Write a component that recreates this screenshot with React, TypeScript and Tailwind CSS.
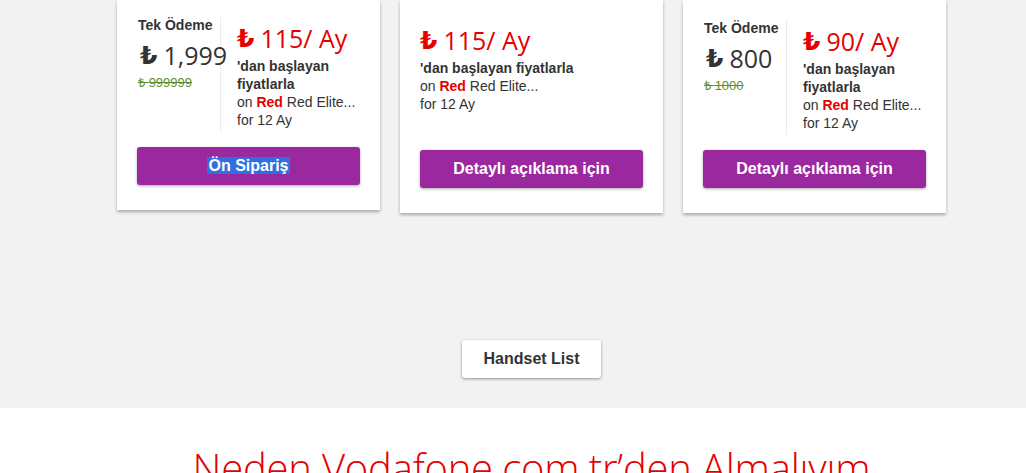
import React from 'react';

const sans = { fontFamily: '"Liberation Sans", Arial, sans-serif' };
const thin = { fontFamily: '"Open Sans", sans-serif' };

const Lira = ({ red }: { red?: boolean }) => (
  <span
    className={red ? 'text-[#e60000] font-bold text-[25px] mr-[6px]' : 'text-[#333] font-bold text-[25px] mr-[6px]'}
    style={{ fontFamily: '"DejaVu Sans", sans-serif' }}
  >
    ₺
  </span>
);

const Monthly = ({ amount }: { amount: string }) => (
  <div className="h-[32px] flex items-center whitespace-nowrap leading-none">
    <Lira red />
    <span className="text-[25px] text-[#e60000]" style={thin}>{amount}/ Ay</span>
  </div>
);

const Details = ({ wrap }: { wrap?: boolean }) => (
  <div className="text-[14px] leading-[18px] text-[#333]">
    <p className="font-bold">
      'dan başlayan{wrap ? <br /> : ' '}fiyatlarla
    </p>
    <p>
      on <span className="font-bold text-[#e60000]">Red</span> Red Elite...
    </p>
    <p>for 12 Ay</p>
  </div>
);

const Button = ({ children }: { children: React.ReactNode }) => (
  <button className="w-full h-[38px] rounded-[3px] bg-[#9c28a0] text-white font-bold text-[16px] shadow-[0_1px_3px_rgba(0,0,0,0.35)]">
    {children}
  </button>
);

const SplitCard = ({ top, once, old, amount, button, bottom }: { top: number; once: string; old: string; amount: string; button: React.ReactNode; bottom: number }) => (
  <div className="w-[263px] bg-white shadow-[0_2px_3px_rgba(0,0,0,0.3)] px-5" style={{ paddingTop: top, paddingBottom: bottom }}>
    <div className="flex">
      <div className="w-[84px] shrink-0 border-r border-[#ececec] pl-px">
        <p className="text-[14px] leading-[16px] font-bold text-[#333] whitespace-nowrap">Tek Ödeme</p>
        <div className="h-[32px] mt-[6px] flex items-center whitespace-nowrap leading-none pl-[2px]">
          <Lira />
          <span className="text-[25px] text-[#333]" style={thin}>{once}</span>
        </div>
        <p className="mt-[4px] text-[13px] leading-[16px] text-[#5f8f2c] line-through whitespace-nowrap">₺ {old}</p>
      </div>
      <div className="pl-4 pt-[5px] pb-[3px]">
        <Monthly amount={amount} />
        <div className="mt-[3px]">
          <Details wrap />
        </div>
      </div>
    </div>
    <div className="mt-[15px]">
      <Button>{button}</Button>
    </div>
  </div>
);

export default function App() {
  return (
    <div className="w-[1026px] min-h-[473px] bg-[#f2f2f2] overflow-hidden" style={sans}>
      <div className="ml-[117px] w-[829px]">
        <div className="flex gap-5 items-start">
          <SplitCard
            top={17}
            once="1,999"
            old="999999"
            amount="115"
            bottom={25}
            button={<span className="bg-[#2f6fe2] px-px">Ön Sipariş</span>}
          />
          <div className="w-[263px] bg-white shadow-[0_2px_3px_rgba(0,0,0,0.3)] px-5 pt-[24px] pb-[25px]">
            <Monthly amount="115" />
            <div className="mt-[3px]">
              <Details />
            </div>
            <div className="mt-[37px]">
              <Button>Detaylı açıklama için</Button>
            </div>
          </div>
          <SplitCard top={20} once="800" old="1000" amount="90" bottom={25} button="Detaylı açıklama için" />
        </div>
        <div className="flex justify-center pt-[127px] pb-[30px]">
          <button className="w-[139px] h-[38px] bg-white rounded-[3px] shadow-[0_1px_3px_rgba(0,0,0,0.4)] text-[16px] font-bold text-[#333]">
            Handset List
          </button>
        </div>
      </div>
      <div className="bg-white h-[65px] overflow-hidden">
        <div className="ml-[117px] w-[829px] pt-[36px] text-center">
          <h2 className="text-[40px] leading-[48px] font-light text-[#e60000] whitespace-nowrap tracking-[-0.2px]" style={thin}>
            Neden Vodafone.com.tr’den Almalıyım
          </h2>
        </div>
      </div>
    </div>
  );
}
